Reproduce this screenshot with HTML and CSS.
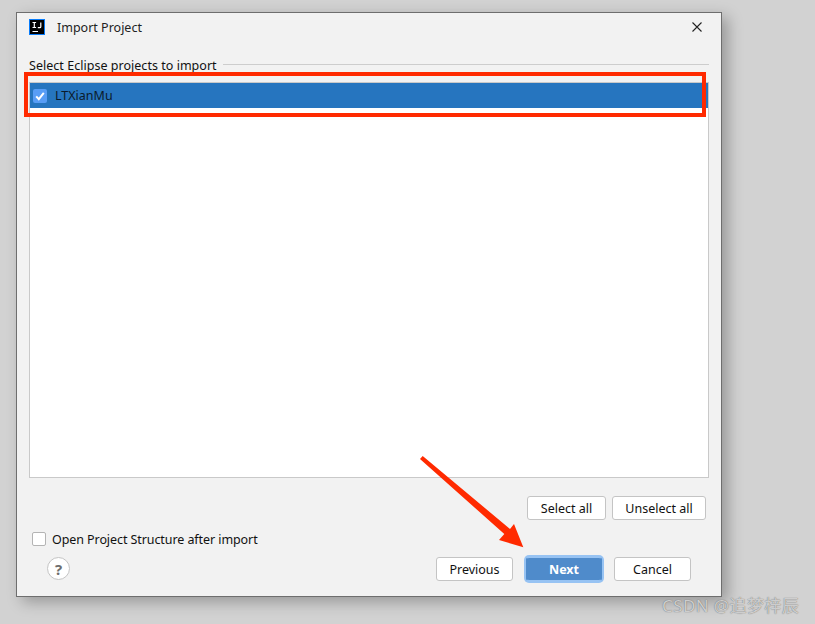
FILE: index.html
```html
<!DOCTYPE html>
<html lang="en">
<head>
<meta charset="utf-8">
<title>Import Project</title>
<link rel="stylesheet" href="styles.css">
</head>
<body>
<div class="dialog">
  <header class="titlebar">
    <svg class="logo" width="16" height="16" viewBox="0 0 16 16"><rect x=".5" y=".5" width="15" height="15" fill="#000" stroke="#087cfa"/><path d="M3.500 3.500h3.600M5.300 3.500v5M3.500 8.500h3.600M11.800 3.500v4.200q0 .9-1 .9h-2M3.500 12.500h5.500" stroke="#fff" fill="none" stroke-width="1.200"/></svg>
    <span class="title">Import Project</span>
    <svg class="close" width="10" height="10" viewBox="0 0 10 10"><path d="M.5.5l9 9M9.500.5l-9 9" stroke="#222" stroke-width="1.100" fill="none"/></svg>
  </header>
  <div class="section"><span class="section-label">Select Eclipse projects to import</span><span class="section-rule"></span></div>
  <div class="list">
    <div class="row">
      <span class="check-on"><svg width="14" height="14" viewBox="0 0 14 14"><path d="M3.200 7.400l2.600 2.800 5-6.400" stroke="#fff" stroke-width="2" fill="none"/></svg></span>
      <span>LTXianMu</span>
    </div>
  </div>
  <div class="select-actions">
    <button class="btn btn-select">Select all</button>
    <button class="btn btn-unselect">Unselect all</button>
  </div>
  <label class="option"><span class="check-off"></span><span class="option-text">Open Project Structure after import</span></label>
  <footer class="footer">
    <span class="help">?</span>
    <div class="nav">
      <button class="btn btn-nav">Previous</button>
      <button class="btn btn-nav btn-primary">Next</button>
      <button class="btn btn-nav">Cancel</button>
    </div>
  </footer>
</div>
<div class="mark-box"></div>
<svg class="mark-arrow" width="120" height="100" viewBox="0 0 120 100"><path d="M1 4L3.700 1 91 74 95 69 104.300 92.300 80 85 85.300 79Z" fill="#ff2a00"/></svg>
<div class="watermark">CSDN @追梦梓辰</div>
</body>
</html>
```
FILE: styles.css
```css
* { box-sizing: border-box; }
html, body { margin: 0; height: 100%; }
body {
  background: #d2d2d2;
  padding: 12px 0 0 16px;
  font-family: "Noto Sans", "Noto Sans CJK SC", sans-serif;
  font-size: 12.5px;
  color: #111;
  overflow: hidden;
}
.dialog {
  width: 706px;
  height: 585px;
  background: #f2f2f2;
  border: 1px solid #6e6e6e;
  box-shadow: 6px 5px 14px rgba(0, 0, 0, .28);
  padding: 0 12px;
  display: flex;
  flex-direction: column;
}
.titlebar {
  height: 28px;
  display: flex;
  align-items: center;
}
.logo { flex: none; }
.title { margin-left: 12px; color: #222; }
.close { margin-left: auto; margin-right: 7px; }
.section {
  display: flex;
  align-items: center;
  gap: 6px;
  height: 18px;
  margin-top: 15px;
}
.section-label { letter-spacing: .03px; }
.section-rule { flex: 1; height: 1px; background: #cdcdcd; margin-bottom: 2px; }
.list {
  height: 396px;
  margin-top: 8px;
  background: #fff;
  border: 1px solid #c9c9c9;
}
.row {
  height: 25px;
  background: #2675bf;
  display: flex;
  align-items: center;
  gap: 8px;
  padding-left: 3px;
  color: #0b1a2b;
}
.check-on {
  width: 14px;
  height: 14px;
  border-radius: 2px;
  background: #589df6;
  display: flex;
}
.select-actions {
  display: flex;
  justify-content: flex-end;
  gap: 6px;
  margin-top: 18px;
  margin-right: 3px;
}
.btn {
  font: inherit;
  color: #111;
  background: #fff;
  border: 1px solid #c4c4c4;
  border-radius: 3px;
  padding: 0;
  height: 24px;
}
.btn-select { width: 79px; }
.btn-unselect { width: 94px; }
.option {
  display: flex;
  align-items: center;
  gap: 6px;
  margin-top: 12px;
  margin-left: 3px;
  height: 14px;
}
.option-text { letter-spacing: -.08px; }
.check-off {
  width: 14px;
  height: 14px;
  background: #fff;
  border: 1px solid #b4b4b4;
  border-radius: 2px;
}
.footer {
  display: flex;
  justify-content: space-between;
  align-items: flex-start;
  margin-top: 11px;
  padding: 0 18px;
}
.help {
  width: 23px;
  height: 23px;
  border: 1px solid #c4c4c4;
  border-radius: 50%;
  background: #fff;
  color: #6e6e6e;
  font-weight: 700;
  font-size: 15px;
  display: flex;
  align-items: center;
  justify-content: center;
}
.nav { display: flex; gap: 12px; }
.btn-nav { width: 77px; }
.btn-primary {
  width: 76px;
  margin-left: 1px;
  background: #4f8bcb;
  border-color: #97c3f3 #4f8bcb;
  color: #fff;
  font-weight: 700;
  box-shadow: 0 0 0 2px #97c3f3;
}
.mark-box {
  position: absolute;
  left: 24px;
  top: 72px;
  width: 682px;
  height: 45px;
  border: 4px solid #ff2a00;
}
.mark-arrow {
  position: absolute;
  left: 419px;
  top: 455px;
}
.watermark {
  position: absolute;
  left: 662px;
  top: 594px;
  font-size: 17px;
  letter-spacing: .4px;
  line-height: 24px;
  color: rgba(225, 225, 225, .85);
  text-shadow: 0 0 1px rgba(70, 70, 70, .9);
  white-space: nowrap;
}
```
